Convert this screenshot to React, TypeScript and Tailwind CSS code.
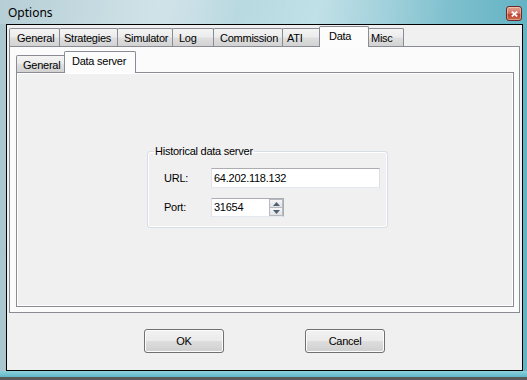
import React from "react";

const F = "font-['Liberation_Sans',Arial,sans-serif] tracking-[-0.25px]";

type TabDef = { label: string; w: number; pl: number; selected?: boolean };

const outerTabs: TabDef[] = [
  { label: "General", w: 51, pl: 7 },
  { label: "Strategies", w: 59, pl: 4 },
  { label: "Simulator", w: 56, pl: 6 },
  { label: "Log", w: 42, pl: 6 },
  { label: "Commission", w: 70, pl: 6 },
  { label: "ATI", w: 40, pl: 4 },
  { label: "Data", w: 46, pl: 7, selected: true },
  { label: "Misc", w: 38, pl: 4 },
];

const innerTabs: TabDef[] = [
  { label: "General", w: 51, pl: 6 },
  { label: "Data server", w: 68, pl: 5, selected: true },
];

function TabRow({ tabs, unselH, selH }: { tabs: TabDef[]; unselH: number; selH: number }) {
  return (
    <div className="flex items-end h-[21px]">
      {tabs.map((t, i) => {
        const first = i === 0;
        if (t.selected) {
          return (
            <div
              key={t.label}
              className="relative z-10 -mb-px border border-b-0 border-[#898c95] bg-[#fcfcfc] text-[11px] leading-[13px] text-black rounded-t-[2px] whitespace-nowrap"
              style={{
                width: t.w + 4,
                height: selH + 1,
                marginLeft: first ? -2 : -3,
                marginRight: -2,
                paddingLeft: t.pl + 2,
                paddingTop: 3,
              }}
            >
              {t.label}
            </div>
          );
        }
        return (
          <div
            key={t.label}
            className="border border-b-0 border-[#898c95] bg-[linear-gradient(to_bottom,#f4f4f4,#ececec_45%,#dedede_55%,#d2d2d2)] text-[11px] leading-[13px] text-black rounded-t-[2px] whitespace-nowrap overflow-hidden"
            style={{
              width: t.w,
              height: unselH,
              marginLeft: first ? 0 : -1,
              paddingLeft: t.pl,
              paddingTop: 3,
            }}
          >
            {t.label}
          </div>
        );
      })}
    </div>
  );
}

function Arrow({ up }: { up?: boolean }) {
  return (
    <svg width="7" height="4" viewBox="0 0 7 4">
      <polygon points={up ? "0,4 7,4 3.5,0" : "0,0 7,0 3.5,4"} fill="#4f5f78" />
    </svg>
  );
}

function Button({ label }: { label: string }) {
  return (
    <div className="w-[80px] h-[24px] rounded-[3px] border border-[#707070] bg-[linear-gradient(to_bottom,#f2f2f2,#ebebeb_48%,#dddddd_52%,#cfcfcf)] shadow-[inset_0_0_0_1px_#fcfcfc] flex items-center justify-center text-[11px] text-black">
      {label}
    </div>
  );
}

export default function App() {
  return (
    <div
      className={`${F} w-[527px] h-[380px] overflow-hidden flex flex-col bg-[linear-gradient(to_right,#a9c5ce,#b9d6de_35%,#a6d3dd_60%,#7fc0ce_85%,#64b3c4)]`}
    >
      {/* Title bar */}
      <div className="h-[24px] flex items-start justify-between pl-[8px] pr-[5px] bg-[linear-gradient(100deg,rgba(255,255,255,0.15),rgba(255,255,255,0.35)_30%,rgba(255,255,255,0.1)_45%,rgba(255,255,255,0.3)_60%,rgba(255,255,255,0)_85%)]">
        <div className="pt-[5px] text-[12px] leading-[15px] tracking-normal text-black font-['Noto_Sans',Arial,sans-serif]">Options</div>
        <div className="mt-[6px] w-[16px] h-[15px] rounded-[3px] border border-[#6b2a22] bg-[linear-gradient(to_bottom,#e6a494,#d0705e_50%,#b8402c_55%,#cf6a50)] flex items-center justify-center shadow-[inset_0_0_0_1px_rgba(255,255,255,0.35)]">
          <svg width="7" height="6" viewBox="0 0 7 6">
            <path d="M0.8 0.6 L6.2 5.4 M6.2 0.6 L0.8 5.4" stroke="#ffffff" strokeWidth="1.8" />
          </svg>
        </div>
      </div>

      {/* Client */}
      <div className="ml-[6px] mr-[4px] h-[347px] border border-black bg-[#f0f0f0] flex flex-col">
        {/* Outer tab control */}
        <div className="mx-[2px] flex flex-col">
          <TabRow tabs={outerTabs} unselH={18} selH={20} />
          <div className="h-[267px] border border-[#898c95] bg-[#fbfbfb] pt-[4px] pl-[6px] pr-[5px] pb-[5px] flex flex-col">
            <TabRow tabs={innerTabs} unselH={17} selH={21} />
            <div className="flex-1 border border-[#898c95] bg-[#f0f0f0] shadow-[inset_0_0_0_1px_#ffffff]">
              <fieldset className="ml-[130px] mt-[72px] w-[241px] h-[83px] border border-[#d5dfe5] rounded-[3px] shadow-[inset_0_0_0_1px_#ffffff]">
                <legend className="ml-[6px] px-[1px] text-[11px] leading-[13px] text-black">Historical data server</legend>
                <div className="pl-[16px] pt-[10px] flex flex-col gap-[10px]">
                  <div className="flex items-center h-[20px]">
                    <div className="w-[47px] text-[11px] text-black">URL:</div>
                    <div className="w-[169px] h-[20px] bg-white border border-[#abadb3] border-l-[#e2e3ea] border-r-[#dbdfe6] border-b-[#e3e9ef] pl-[2px] flex items-center text-[11px] text-black">
                      64.202.118.132
                    </div>
                  </div>
                  <div className="flex items-center h-[19px]">
                    <div className="w-[47px] text-[11px] text-black">Port:</div>
                    <div className="w-[73px] h-[19px] bg-white border border-[#abadb3] border-l-[#e2e3ea] border-b-[#e3e9ef] flex">
                      <div className="flex-1 pl-[2px] flex items-center text-[11px] text-black">31654</div>
                      <div className="w-[14px] flex flex-col">
                        <div className="h-[9px] border border-[#b4b9c2] bg-[linear-gradient(to_bottom,#f6f6f6,#e2e2e2)] flex items-center justify-center">
                          <Arrow up />
                        </div>
                        <div className="h-[8px] border border-t-0 border-[#b4b9c2] bg-[linear-gradient(to_bottom,#f6f6f6,#e2e2e2)] flex items-center justify-center">
                          <Arrow />
                        </div>
                      </div>
                    </div>
                  </div>
                </div>
              </fieldset>
            </div>
          </div>
        </div>
        {/* Buttons */}
        <div className="flex-1 flex items-center justify-center gap-[81px] pb-px">
          <Button label="OK" />
          <Button label="Cancel" />
        </div>
      </div>

      {/* Bottom frame */}
      <div className="h-[6px] bg-[linear-gradient(to_bottom,#8fd0dc,#5db7c8)]" />
      <div className="flex-1 bg-[#5a5a5a]" />
    </div>
  );
}
